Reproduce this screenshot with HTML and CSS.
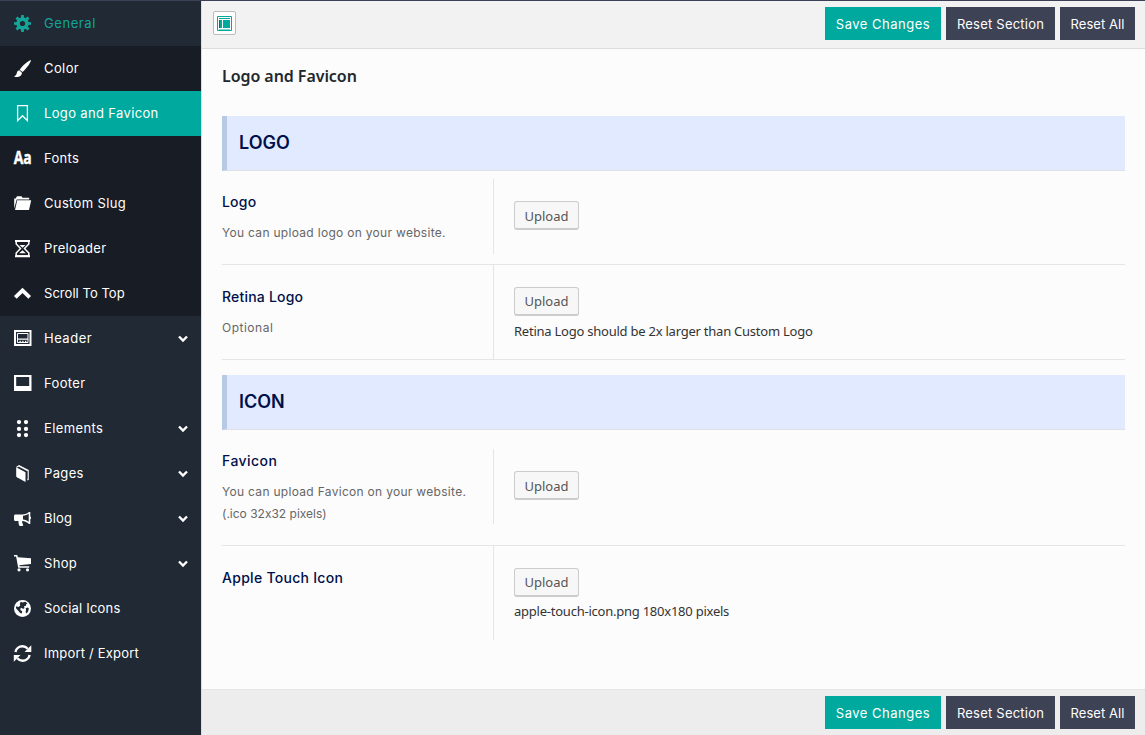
FILE: index.html
```html
<!DOCTYPE html>
<html lang="en">
<head>
<meta charset="utf-8">
<title>Theme Options</title>
<link rel="stylesheet" href="styles.css">
</head>
<body>
<div class="app">
  <nav class="sidebar">
    <a class="item current"><svg class="icon" viewBox="0 0 17 17"><g fill="currentColor"><path fill-rule="evenodd" d="M8.5 2.3a6.2 6.2 0 1 0 0 12.4a6.2 6.2 0 1 0 0-12.4M8.500 5.900a2.600 2.600 0 1 1 0 5.200a2.600 2.600 0 1 1 0-5.200"/><path id="tooth" d="M6.900 3L7.200 0h2.600l.3 3zM6.900 14l.3 3h2.600l.3-3z"/><use href="#tooth" transform="rotate(45 8.500 8.500)"/><use href="#tooth" transform="rotate(90 8.500 8.500)"/><use href="#tooth" transform="rotate(135 8.500 8.500)"/></g></svg><span class="t-general">General</span></a>
    <div class="submenu">
      <a class="item"><svg class="icon" viewBox="0 0 17 17"><path fill="currentColor" d="M17 0C14 .8 9 5 5.700 9.700l2.900 2.400C12.200 8.500 16.500 3.500 17 0zM5.200 10.300C3.300 10.600 3 12 2.700 13.500 2.300 15 1.300 15.800 0 16.400c2.500 1.200 7.600 1 8-3.700z"/></svg><span class="t-color">Color</span></a>
      <a class="item active"><svg class="icon" viewBox="0 0 17 17"><path fill="none" stroke="currentColor" stroke-width="1.300" d="M3.600.65h9.800v15.100l-4.900-5-4.900 5z"/></svg><span class="t-logo">Logo and Favicon</span></a>
      <a class="item"><svg class="icon" viewBox="0 0 17 17"><text class="glyph" x="-.3" y="14" textLength="18" lengthAdjust="spacingAndGlyphs">Aa</text></svg><span class="t-fonts">Fonts</span></a>
      <a class="item"><svg class="icon" viewBox="0 0 17 17"><g fill="currentColor"><path d="M.2 13.500V3.500h1.500L3 1.300h4.500l1 1.500h6.700V4.500H2.700z"/><path d="M3.200 5.200H17.200L15 15H1z"/></g></svg><span class="t-slug">Custom Slug</span></a>
      <a class="item"><svg class="icon" viewBox="0 0 17 17"><path fill="none" stroke="currentColor" stroke-width="1.500" d="M2.200 1v3l4.300 4.500-4.300 4.500v3h12.600v-3l-4.300-4.500 4.300-4.500V1z"/><path fill="currentColor" d="M1 0h15v2H1zM1 15.200h15v2H1zM5.500 5h6L8.500 7.700zM8.500 10.300l3.300 2.900H5.200z"/></svg><span class="t-pre">Preloader</span></a>
      <a class="item"><svg class="icon" viewBox="0 0 17 17"><path fill="none" stroke="currentColor" stroke-width="3.800" d="M1.300 12.300l7.200-7 7.200 7"/></svg><span class="t-scroll">Scroll To Top</span></a>
    </div>
    <a class="item"><svg class="icon" viewBox="0 0 17 17"><path fill="currentColor" fill-rule="evenodd" d="M0 0h17.500v16H0zM2 2v12h13.500V2z"/><path fill="none" stroke="currentColor" d="M3.500 3.500h10.500v9H3.500z"/><path fill="currentColor" d="M3.500 8.500H14v1.300H3.500zM5.500 10.800h1.300v2H5.500zM8.200 10.800h1.300v2H8.200zM11 10.800h1.300v2H11z"/></svg><span class="t-header">Header</span><svg class="caret" viewBox="0 0 10 8"><path d="M1 1.500l4 4 4-4"/></svg></a>
    <a class="item"><svg class="icon" viewBox="0 0 17 17"><path fill="currentColor" fill-rule="evenodd" d="M0 0h17.500v16H0zM2.200 2v9h13V2z"/></svg><span class="t-footer">Footer</span></a>
    <a class="item"><svg class="icon" viewBox="0 0 17 17"><g fill="currentColor"><circle cx="5" cy="2.100" r="2.150"/><circle cx="12" cy="2.100" r="2.150"/><circle cx="5" cy="8.900" r="2.150"/><circle cx="12" cy="8.900" r="2.150"/><circle cx="5" cy="15.100" r="2.150"/><circle cx="12" cy="15.100" r="2.150"/></g></svg><span class="t-elements">Elements</span><svg class="caret" viewBox="0 0 10 8"><path d="M1 1.500l4 4 4-4"/></svg></a>
    <a class="item"><svg class="icon" viewBox="0 0 17 17"><path fill="currentColor" d="M2.200 2.200L11.500 7.200v9.800L3 12.300l-.8-.9z"/><path fill="none" stroke="currentColor" stroke-width="1.100" d="M2.600 2.200L5 .6l9.200 4.700v9.200l-1 .5"/><path fill="currentColor" d="M4 1.200l1.200-.5 8.700 4.600-.4.900z"/></svg><span class="t-pages">Pages</span><svg class="caret" viewBox="0 0 10 8"><path d="M1 1.500l4 4 4-4"/></svg></a>
    <a class="item"><svg class="icon" viewBox="0 0 17 17"><path fill="currentColor" fill-rule="evenodd" d="M1.200 4.500H8C11 4.500 13.500 3.200 15 2h1.300v4.500c1 .2 1 2.600 0 2.800V14H15c-2-1.800-4-2.800-6.700-3-.8 1 .6 2 .1 2.500.7.900.5 1.400.9 2-1 .7-3 .7-4 .2C4.900 14 4.200 13 4.500 11H1.200C0 11 0 9.800 0 7.700S0 4.500 1.200 4.500zM9 5.800v3.800c2.400.3 4.200 1.200 5.700 2.200V3.800C13 4.900 11.200 5.600 9 5.800z"/></svg><span class="t-blog">Blog</span><svg class="caret" viewBox="0 0 10 8"><path d="M1 1.500l4 4 4-4"/></svg></a>
    <a class="item"><svg class="icon" viewBox="0 0 17 17"><g fill="currentColor"><path d="M0 0h3.200l.7 2.200L17 3.300V9L5.400 10.300l.2 1h9.600v1.500H4.200L2.100 1.500H0z"/><circle cx="5" cy="14.800" r="1.600"/><circle cx="13.500" cy="14.800" r="1.600"/></g></svg><span class="t-shop">Shop</span><svg class="caret" viewBox="0 0 10 8"><path d="M1 1.500l4 4 4-4"/></svg></a>
    <a class="item"><svg class="icon" viewBox="0 0 17 17"><circle cx="8.500" cy="8.500" r="8.500" fill="currentColor"/><path fill="#202934" d="M6.700 1.800l2 .6 2.500-.6 2.200 1.400-1.200 1-.2 1.600-2 .4.500 1.700-1.500 1.200-1.300-1.300-1.500 1 .3 1.500 1.600.8-.2 2.500-1.700-.7L4 10.500 2 8.300 2.100 6.200 4.500 7l1.800-1.500-.5-1.400zM11.600 8.200l2-.8 1.300 1.100-.7 2.800-1.500 2.200-1.200-1.600.6-1.800z"/></svg><span class="t-social">Social Icons</span></a>
    <a class="item"><svg class="icon" viewBox="0 0 17 17"><path fill="none" stroke="currentColor" stroke-width="2.400" d="M1.400 7C2 3.600 5 1.300 8.500 1.300c2.200 0 4 1 5.200 2.400M15.600 10c-.6 3.400-3.600 5.700-7.100 5.700-2.200 0-4-1-5.200-2.400"/><path fill="currentColor" d="M17.300.2V7h-6.700zM-.2 16.800V10h6.700z"/></svg><span class="t-import">Import / Export</span></a>
  </nav>
  <main class="main">
    <header class="bar top">
      <button class="expand" aria-label="Expand"><svg width="15" height="15" viewBox="0 0 15 15"><path fill="none" stroke="#00a99d" d="M.5.500h14v14H.5z"/><path fill="#00a99d" d="M2 2h11v1H2zM2 4h3v8H2zM6 4h7v8H6zM2 13h11v.6H2z"/><path fill="#146a68" d="M2 4h1v8H2z"/></svg></button>
      <div class="actions"><button class="btn save">Save Changes</button><button class="btn section">Reset Section</button><button class="btn all">Reset All</button></div>
    </header>
    <section class="content">
      <h2 class="title">Logo and Favicon</h2>
      <h3 class="band">LOGO</h3>
      <div class="row short">
        <div class="label"><h4 class="h-logo">Logo</h4><p class="d-logo">You can upload logo on your website.</p></div>
        <div class="field"><button class="upload">Upload</button></div>
      </div>
      <div class="row tall">
        <div class="label"><h4 class="h-retina">Retina Logo</h4><p class="d-opt">Optional</p></div>
        <div class="field"><button class="upload">Upload</button><p class="note">Retina Logo should be 2x larger than Custom Logo</p></div>
      </div>
      <h3 class="band second">ICON</h3>
      <div class="row short favicon">
        <div class="label"><h4 class="h-fav">Favicon</h4><p class="d-fav">You can upload Favicon on your website.</p><p class="d-ico">(.ico 32x32 pixels)</p></div>
        <div class="field"><button class="upload">Upload</button></div>
      </div>
      <div class="row tall last">
        <div class="label"><h4 class="h-apple">Apple Touch Icon</h4></div>
        <div class="field"><button class="upload">Upload</button><p class="note">apple-touch-icon.png 180x180 pixels</p></div>
      </div>
    </section>
    <footer class="bar bottom">
      <div class="actions"><button class="btn save">Save Changes</button><button class="btn section">Reset Section</button><button class="btn all">Reset All</button></div>
    </footer>
  </main>
</div>
</body>
</html>
```
FILE: styles.css
```css
* { box-sizing: border-box; margin: 0; padding: 0; }
body { font-family: Inter, "Liberation Sans", sans-serif; font-feature-settings: "calt" 0; background: #fcfcfc; overflow: hidden; }
button { font-family: inherit; font-feature-settings: inherit; }
.app { display: flex; height: 735px; border-top: 1px solid #3b4054; }

.sidebar { width: 201px; flex: none; background: #202934; color: #fff; }
.submenu { background: #171c25; }
.item { display: flex; align-items: center; height: 45px; padding: 0 13px 0 14px; font-size: 13px; line-height: 20px; white-space: nowrap; }
.item span { margin-left: 13px; padding-bottom: 2px; }
.icon { width: 17px; height: 17px; flex: none; overflow: visible; }
.glyph { font: 700 17px "Open Sans", sans-serif; fill: currentColor; stroke: currentColor; stroke-width: .4px; }
.current { color: #12a598; }
.active { background: #00a99d; }
.caret { width: 10px; height: 8px; margin-left: auto; margin-top: 1px; fill: none; stroke: #fff; stroke-width: 2.400; }

.t-general { letter-spacing: .57px; }
.t-color, .t-elements { letter-spacing: .4px; }
.t-logo, .t-slug, .t-pre, .t-footer, .t-pages, .t-shop { letter-spacing: .35px; }
.t-fonts { letter-spacing: .3px; }
.t-header { letter-spacing: .5px; }
.t-blog, .t-social, .t-import { letter-spacing: .2px; }
.t-scroll { letter-spacing: .04px; }

.main { flex: 1; display: flex; flex-direction: column; border-left: 1px solid #ddd; }
.bar { display: flex; flex: none; padding: 6px 10px 0; }
.top { height: 48px; background: #f2f2f2; border-bottom: 1px solid #ddd; }
.bottom { height: 46px; background: #ededed; border-top: 1px solid #e5e5e5; }
.expand { display: flex; align-items: center; justify-content: center; width: 23px; height: 24px; margin: 4px 0 0 1px; background: #fdfdfd; border: 1px solid #bbb; border-radius: 2px; }
.actions { display: flex; gap: 5px; margin-left: auto; }
.btn { height: 33px; border: 0; background: #3d4255; color: #fff; font-size: 13px; white-space: nowrap; }
.save { width: 116px; background: #00a99d; letter-spacing: .5px; }
.section { width: 109px; letter-spacing: .22px; }
.all { width: 75px; letter-spacing: .06px; }

.content { flex: 1; padding: 15px 20px 0; }
.title { height: 52px; font: 600 16px/24px "Noto Sans", sans-serif; letter-spacing: -.06px; color: #23282d; }
.band { height: 55px; padding-left: 12px; background: #e2eaff; border-left: 5px solid #b8c9e6; border-bottom: 1px solid #dfe1e5; font-size: 18px; line-height: 54px; font-weight: 600; color: #00104a; }
.second { margin-top: 15px; }
.row { display: flex; border-bottom: 1px solid #e5e5e5; }
.label { width: 271px; padding-top: 21px; }
.label h4 { font-size: 14px; line-height: 20px; font-weight: 500; color: #00104a; white-space: nowrap; }
.label p { font-size: 12px; line-height: 22px; color: #666; white-space: nowrap; }
.label h4 + p { margin-top: 10px; }
.h-logo, .h-retina { letter-spacing: .2px; }
.h-fav { letter-spacing: .45px; }
.h-apple { letter-spacing: .28px; }
.d-logo, .d-fav { letter-spacing: .3px; }
.d-opt { letter-spacing: .5px; }
.field { flex: 1; border-left: 1px solid #e5e5e5; padding: 22px 0 0 20px; font-family: "Noto Sans", sans-serif; }
.short { height: 94px; }
.short .field { height: 75px; margin-top: 8px; }
.short .upload { padding-top: 1px; }
.favicon { height: 116px; }
.favicon .field { margin-top: 19px; }
.tall { height: 95px; }
.tall .label { padding-top: 22px; }
.tall .field { height: 94px; }
.last { border: 0; }
.upload { display: block; width: 65px; height: 29px; background: #f7f7f7; border: 1px solid #ccc; border-bottom-width: 2px; border-radius: 3px; color: #555; font-size: 13px; }
.note { margin-top: 5px; font-size: 13px; line-height: 20px; letter-spacing: -.235px; color: #333; white-space: nowrap; }
.last .note { margin-top: 4px; }
```
